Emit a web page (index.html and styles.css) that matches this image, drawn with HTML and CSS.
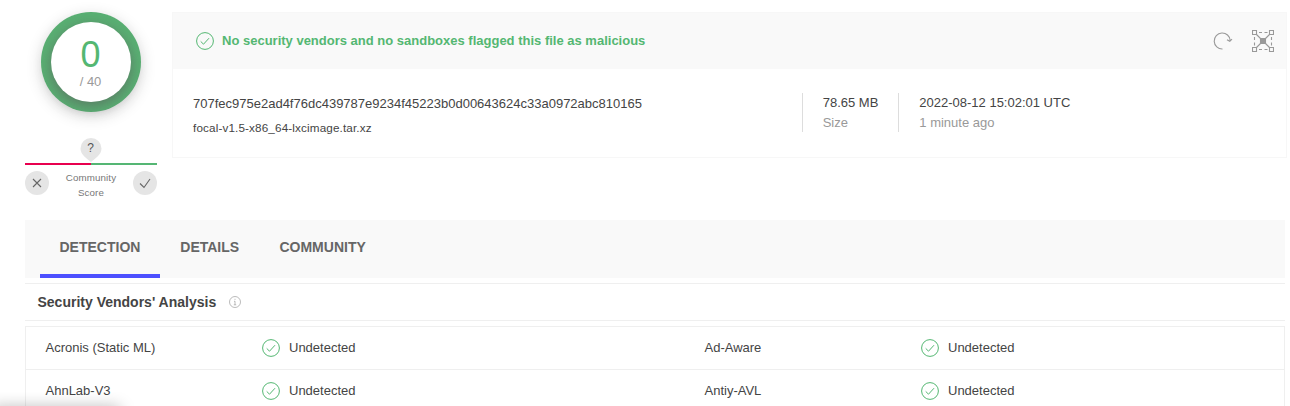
FILE: index.html
```html
<!DOCTYPE html>
<html lang="en">
<head>
<meta charset="utf-8">
<title>File report</title>
<link rel="stylesheet" href="styles.css">
</head>
<body>
<svg class="symbols" aria-hidden="true">
  <symbol id="check" viewBox="0 0 18 18"><circle cx="9" cy="9" r="8.4"/><path d="M4.7 9.4 7.5 12.2 13 6.2"/></symbol>
</svg>
<main class="page">
  <section class="summary">
    <aside class="score">
      <div class="ring"><div class="ring-inner"><span class="positives">0</span><span class="total">/ 40</span></div></div>
      <div class="community">
        <div class="pin">
          <svg width="22" height="24" viewBox="0 0 22 24"><path d="M11 24C7.4 21 .5 17 .5 10.5a10.5 10.5 0 0 1 21 0C21.500 17 14.600 21 11 24Z" fill="#e5e5e5"/></svg>
          <span class="pin-label">?</span>
        </div>
        <div class="bar"><i class="bad"></i><i class="good"></i></div>
        <div class="votes">
          <span class="vote"><svg width="24" height="24"><path d="M8 8 16 16M16 8 8 16"/></svg></span>
          <span class="caption">Community<br>Score</span>
          <span class="vote"><svg width="24" height="24"><path d="M7 12.500 11 16.500 17 8"/></svg></span>
        </div>
      </div>
    </aside>
    <article class="card">
      <header class="card-head">
        <svg class="check" width="18" height="18"><use href="#check"/></svg>
        <h1>No security vendors and no sandboxes flagged this file as malicious</h1>
        <svg class="tool reload" width="20" height="20" viewBox="0 0 20 20"><path d="M9.500 18A8 8 0 1 1 17.200 9.500M14 8.700 16.800 10.300 19 8.200"/></svg>
        <svg class="tool graph" width="22" height="22" viewBox="0 0 22 22"><path d="M4.500 4.500 17.500 17.500M17.500 4.500 4.500 17.500"/><path d="M7 2.500h3M12.500 2.500h3M7 19.500h3M12.500 19.500h3M2.500 7v3M2.500 12.500v3M19.500 7v3M19.500 12.500v3"/><path class="nodes" d="M.5.5h4v4h-4zM17.500.5h4v4h-4zM.5 17.500h4v4h-4zM17.500 17.500h4v4h-4z"/><path class="core" d="M8.500 8.500h5v5h-5z"/></svg>
      </header>
      <div class="card-body">
        <div class="file"><div class="hash">707fec975e2ad4f76dc439787e9234f45223b0d00643624c33a0972abc810165</div><div class="name">focal-v1.5-x86_64-lxcimage.tar.xz</div></div>
        <div class="fact size"><b>78.65 MB</b><span>Size</span></div>
        <div class="fact date"><b>2022-08-12 15:02:01 UTC</b><span>1 minute ago</span></div>
      </div>
    </article>
  </section>
  <nav class="tabs"><a class="tab active">DETECTION</a><a class="tab">DETAILS</a><a class="tab">COMMUNITY</a></nav>
  <section class="report">
    <div class="report-head"><h2>Security Vendors' Analysis</h2>
      <svg class="info" width="12" height="12" viewBox="0 0 12 12"><circle cx="6" cy="6" r="5.500"/><path d="M6 5.200v3.600M5 5.300h1M4.800 8.800h2.400M6 2.800v1.100"/></svg>
    </div>
    <div class="results">
      <div class="row">
        <span class="engine">Acronis (Static ML)</span><span class="verdict"><svg class="check" width="18" height="18"><use href="#check"/></svg>Undetected</span>
        <span class="engine">Ad-Aware</span><span class="verdict"><svg class="check" width="18" height="18"><use href="#check"/></svg>Undetected</span>
      </div>
      <div class="row">
        <span class="engine">AhnLab-V3</span><span class="verdict"><svg class="check" width="18" height="18"><use href="#check"/></svg>Undetected</span>
        <span class="engine">Antiy-AVL</span><span class="verdict"><svg class="check" width="18" height="18"><use href="#check"/></svg>Undetected</span>
      </div>
    </div>
  </section>
</main>
<div class="status-shadow"></div>
</body>
</html>
```
FILE: styles.css
```css
* { box-sizing: border-box; }
body { margin: 0; height: 406px; overflow: hidden; background: #fff; color: #444; font: 13px/20px "Liberation Sans", Arial, sans-serif; }
svg { display: block; flex: none; fill: none; }
.symbols { position: absolute; width: 0; height: 0; }
.page { height: 406px; padding: 12px 3px 0 25px; }
.summary { display: flex; height: 208px; }
.score { flex: none; width: 132px; margin-right: 15px; display: flex; flex-direction: column; align-items: center; }
.ring { width: 100px; height: 100px; padding: 10px; border-radius: 50%; background: #59b073; box-shadow: 0 4px 16px rgba(0,0,0,.16); }
.ring-inner { width: 80px; height: 80px; padding-right: 1px; border-radius: 50%; background: #fff; box-shadow: 0 4px 14px rgba(90,90,90,.65); display: flex; flex-direction: column; align-items: center; }
.positives { margin-top: 13px; font-size: 36px; line-height: 39px; color: #54b772; }
.total { line-height: 16px; color: #9a9a9a; }
.community { width: 132px; margin-top: 26px; }
.pin { display: flex; justify-content: center; height: 25px; position: relative; }
.pin svg { margin-right: 1px; }
.pin-label { position: absolute; top: 0; left: 0; right: 1px; text-align: center; font-size: 12px; color: #555; }
.bar { display: flex; height: 2px; }
.bar i { flex: 1; }
.bad { background: #e8004f; }
.good { background: #55b674; }
.votes { display: flex; justify-content: space-between; margin-top: 6px; }
.vote { width: 24px; height: 24px; border-radius: 50%; background: #e5e5e5; }
.vote svg { stroke: #666; stroke-width: 1.1; }
.caption { margin-top: -1px; font-size: 9.75px; line-height: 15px; text-align: center; color: #777; letter-spacing: .12px; }
.card { flex: none; width: 1115px; height: 146px; border: 1px solid #f7f7f7; }
.card-head { display: flex; align-items: center; height: 56px; padding: 0 12px 0 23px; background: #f9f9f9; }
.check { stroke: #54b772; stroke-width: 1; }
h1 { flex: 1; margin: 0 0 0 8px; font-size: 13px; line-height: 20px; color: #54b772; }
.tool { stroke: #999; stroke-width: 1.1; }
.reload { margin-right: 19px; }
.nodes { fill: #f9f9f9; }
.core { fill: #999; }
.card-body { display: flex; padding: 24px 20px 0; }
.file { width: 609px; padding-top: 1px; }
.name { font-size: 11.7px; letter-spacing: .14px; line-height: 20px; margin-top: 4px; }
.fact { display: flex; flex-direction: column; height: 39px; border-left: 1px solid #ddd; padding-left: 20.3px; }
.fact b { font-weight: 400; line-height: 20px; }
.fact span { color: #999; line-height: 20px; }
.size { width: 96px; padding-left: 19.7px; }
.tabs { display: flex; width: 1260px; height: 58px; padding-left: 15px; background: #f9f9f9; }
.tab { padding: 17px 20px 0 19.5px; font-size: 14px; font-weight: 700; color: #666; border-bottom: 4px solid transparent; }
.active { width: 120px; white-space: nowrap; border-color: #4d50ff; }
.tab + .tab { padding-left: 20.3px; }
.report { width: 1260px; margin-top: 5px; }
.report-head { display: flex; align-items: center; height: 38px; padding-left: 12.5px; border: solid #efefef; border-width: 1px 0; }
h2 { margin: 0; font-size: 14px; line-height: 20px; }
.info { margin-left: 12.5px; stroke: #aaa; stroke-width: .8; }
.results { margin-top: 5px; border: solid #efefef; border-width: 1px 1px 0; }
.row { display: grid; grid-template-columns: 216.5px 442.5px 216.5px 1fr; height: 43px; padding: 11px 0 0 19.5px; align-items: start; border-bottom: 1px solid #efefef; }
.row:last-child { height: 36px; border-bottom: 0; }
.verdict { display: flex; gap: 9px; }
.verdict .check { margin-top: 1.4px; }
.status-shadow { position: absolute; left: 0; bottom: 0; width: 145px; height: 14px; overflow: hidden; }
.status-shadow::before { content: ""; display: block; width: 124px; height: 10px; margin-top: 17px; box-shadow: -6px 0 16px 2px rgba(0,0,0,.28); }
```
